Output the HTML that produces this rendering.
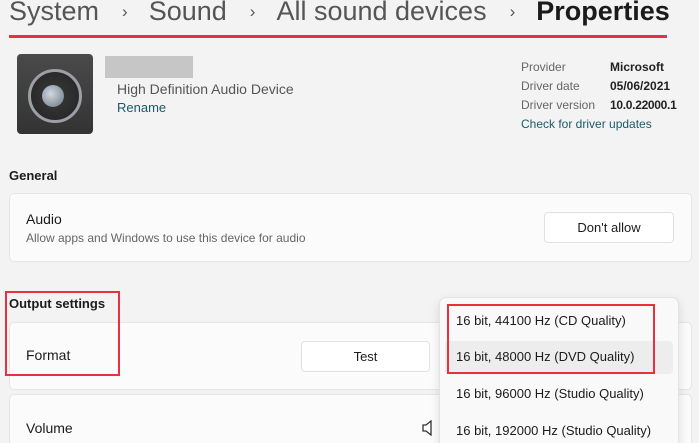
<!DOCTYPE html>
<html style="overflow:hidden;width:699px;height:443px"><head><style>
body{margin:0;width:699px;height:443px;background:#f3f3f3;font-family:"Liberation Sans",sans-serif;position:relative;overflow:hidden;color:#1b1b1b}
.a{position:absolute;white-space:nowrap}
.card{position:absolute;background:#fbfbfb;border:1px solid #e5e5e5;border-radius:5px}
.btn{position:absolute;background:#fff;border:1px solid #e0e0e0;border-radius:4px;font-size:13px;text-align:center;box-sizing:border-box}
.red{position:absolute;border:2px solid #e8303f;box-sizing:border-box}
.g{color:#666;font-size:12px}
.v{font-size:12px;font-weight:bold;color:#222}
.ch{font-size:17px;margin:0 21px 0 23px;position:relative;top:-3px}
</style></head><body>
<div class="a" style="left:9px;top:-4px;font-size:27px;color:#555">System<span class="ch">›</span>Sound<span class="ch">›</span>All sound devices<span class="ch">›</span><span style="color:#1b1b1b;font-weight:bold">Properties</span></div>
<div class="a" style="left:9px;top:35px;width:658px;height:3px;background:#e8303f"></div>
<div class="a" style="left:17px;top:54px;width:76px;height:80px;border-radius:4px;background:linear-gradient(#4a4a4a,#333);"></div>
<div class="a" style="left:28px;top:69px;width:48px;height:48px;border-radius:50%;border:3px solid #9aa0a6;background:radial-gradient(circle,#3a3a3a,#222)"></div>
<div class="a" style="left:42px;top:85px;width:22px;height:22px;border-radius:50%;background:radial-gradient(circle at 40% 40%,#d0d8e0,#6a7580)"></div>
<div class="a" style="left:105px;top:56px;width:88px;height:22px;background:#c6c6c6"></div>
<div class="a" style="left:117px;top:81px;font-size:14px;color:#555">High Definition Audio Device</div>
<div class="a" style="left:117px;top:100px;font-size:13px;color:#1a5a6a">Rename</div>
<div class="a g" style="left:521px;top:60px">Provider</div><div class="a v" style="left:610px;top:60px">Microsoft</div>
<div class="a g" style="left:521px;top:79px">Driver date</div><div class="a v" style="left:610px;top:79px">05/06/2021</div>
<div class="a g" style="left:521px;top:98px">Driver version</div><div class="a v" style="left:610px;top:98px;letter-spacing:-0.3px">10.0.22000.1</div>
<div class="a" style="left:521px;top:117px;font-size:12px;color:#1a5a6a">Check for driver updates</div>
<div class="a" style="left:9px;top:168px;font-size:13px;font-weight:bold">General</div>
<div class="card" style="left:9px;top:193px;width:681px;height:67px"></div>
<div class="a" style="left:26px;top:211px;font-size:14px">Audio</div>
<div class="a" style="left:26px;top:231px;font-size:12px;color:#666">Allow apps and Windows to use this device for audio</div>
<div class="btn" style="left:544px;top:212px;width:130px;height:31px;line-height:30px">Don't allow</div>
<div class="a" style="left:9px;top:296px;font-size:13px;font-weight:bold">Output settings</div>
<div class="card" style="left:9px;top:322px;width:681px;height:66px"></div>
<div class="a" style="left:26px;top:347px;font-size:14px">Format</div>
<div class="btn" style="left:301px;top:341px;width:129px;height:31px;line-height:30px">Test</div>
<div class="a" style="left:445px;top:348px;width:4px;height:18px;background:#1a5a6a"></div>
<div class="card" style="left:9px;top:394px;width:681px;height:60px"></div>
<div class="a" style="left:26px;top:420px;font-size:14px">Volume</div>
<svg class="a" style="left:422px;top:420px" width="14" height="16" viewBox="0 0 14 16"><path d="M1 5h3l5-4v14l-5-4H1z" fill="none" stroke="#333" stroke-width="1.3"/></svg>
<div class="a" style="left:439px;top:297px;width:238px;height:160px;background:#f9f9f9;border:1px solid #e3e3e3;border-radius:7px;box-shadow:0 4px 10px rgba(0,0,0,.12)"></div>
<div class="a" style="left:445px;top:341px;width:228px;height:33px;background:#ededed;border-radius:4px"></div>
<div class="a" style="left:456px;top:313px;font-size:13px">16 bit, 44100 Hz (CD Quality)</div>
<div class="a" style="left:456px;top:349px;font-size:13px">16 bit, 48000 Hz (DVD Quality)</div>
<div class="a" style="left:456px;top:386px;font-size:13px">16 bit, 96000 Hz (Studio Quality)</div>
<div class="a" style="left:456px;top:423px;font-size:13px">16 bit, 192000 Hz (Studio Quality)</div>
<div class="red" style="left:5px;top:291px;width:115px;height:85px"></div>
<div class="red" style="left:447px;top:304px;width:208px;height:70px"></div>
</body></html>
